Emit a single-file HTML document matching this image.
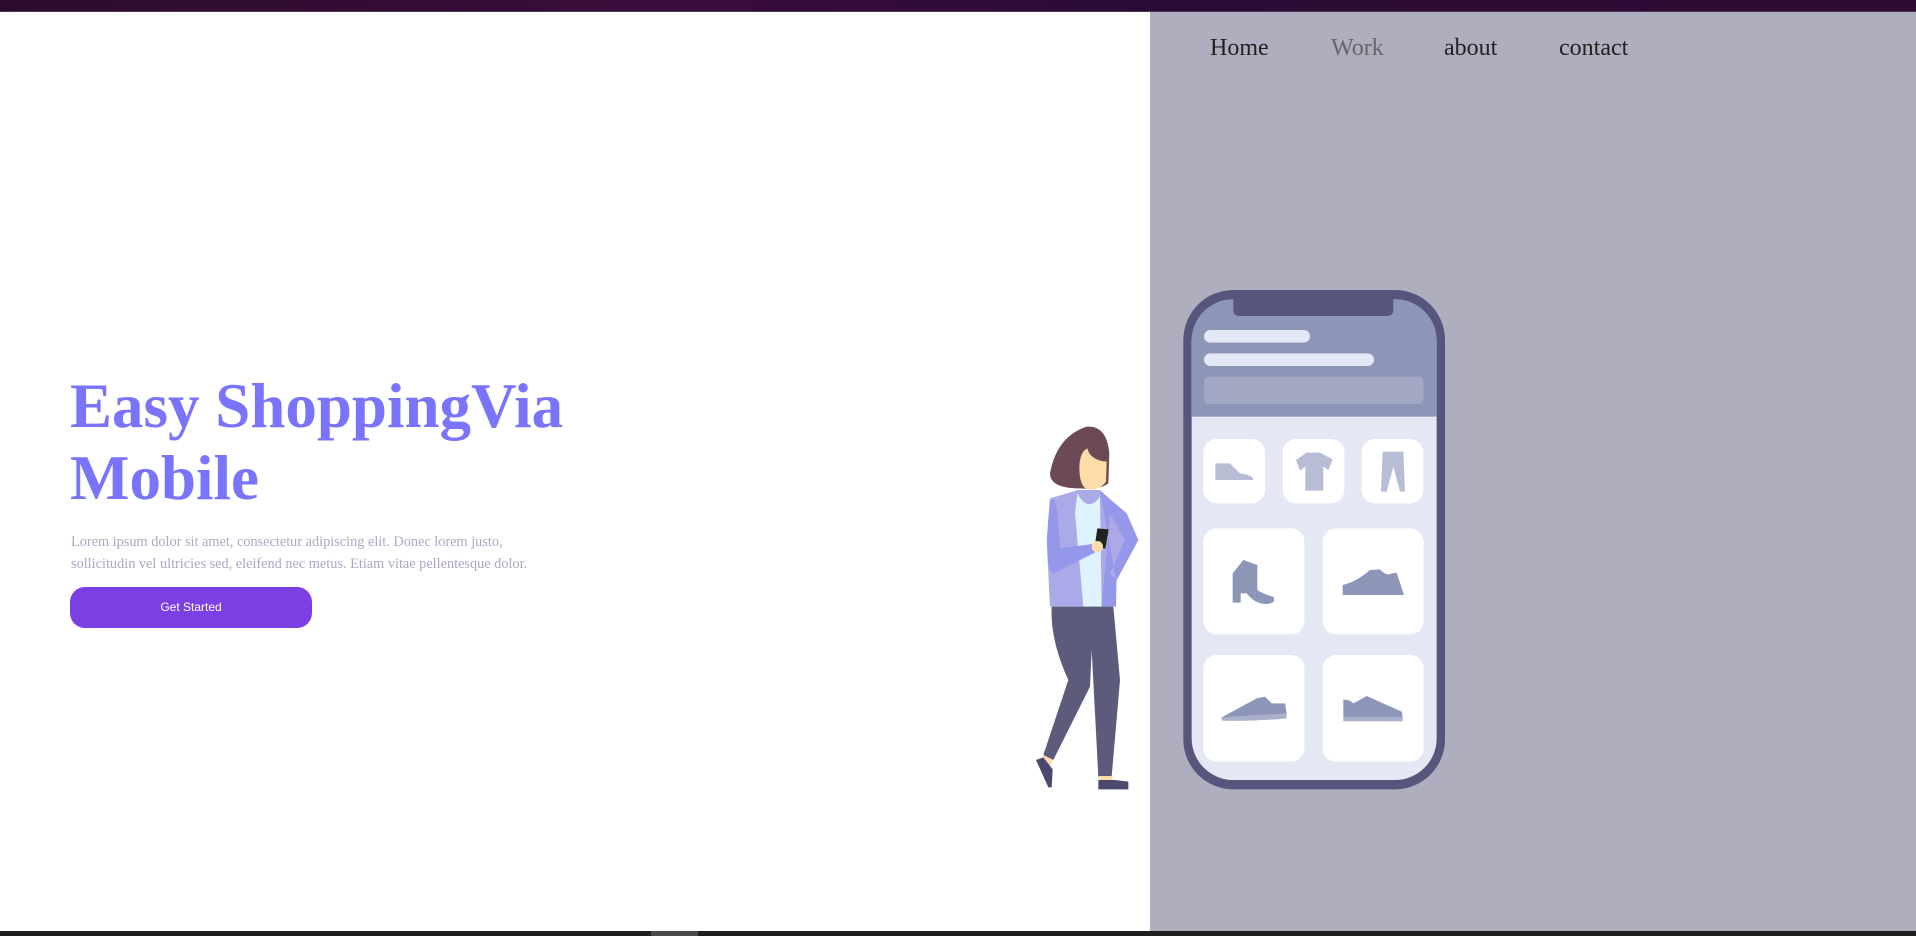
<!DOCTYPE html>
<html><head><meta charset="utf-8"><style>
*{margin:0;padding:0;box-sizing:border-box}
html,body{width:1916px;height:936px;overflow:hidden;background:#fff;font-family:"Liberation Serif",serif}
.top{position:absolute;left:0;top:0;width:1916px;height:12px;background:linear-gradient(90deg,#2b0b2c,#3a0d3c 35%,#2a0a35 60%,#2e0933);border-bottom:1px solid #4a3a4e}
.bot{position:absolute;left:0;top:931px;width:1916px;height:5px;background:#1f1f1f}
.bot i{position:absolute;left:651px;top:0;width:47px;height:5px;background:#4a4a4a}
.right{position:absolute;left:1150px;top:12px;width:766px;height:919px;background:#afaebf}
nav a{position:absolute;top:35px;font-size:24px;color:#222;text-decoration:none}
h1{position:absolute;left:70px;top:370px;font-size:63px;line-height:72px;color:#7a73fc;font-weight:bold}
p{position:absolute;left:71px;top:531px;width:490px;font-size:14.3px;line-height:22px;color:#a9a9c6}
.btn{position:absolute;left:70px;top:587px;width:242px;height:41px;border-radius:15px;background:#7b3fe4;color:#fff;font:12px "Liberation Sans",sans-serif;text-align:center;line-height:41px}
svg{position:absolute;left:1000px;top:280px}
</style></head><body>
<div class="top"></div>
<div class="right"></div>
<nav><a style="left:1210px">Home</a><a style="left:1331px;color:#666">Work</a><a style="left:1444px">about</a><a style="left:1559px">contact</a></nav>
<h1>Easy ShoppingVia<br>Mobile</h1>
<p>Lorem ipsum dolor sit amet, consectetur adipiscing elit. Donec lorem justo, sollicitudin vel ultricies sed, eleifend nec metus. Etiam vitae pellentesque dolor.</p>
<div class="btn">Get Started</div>
<svg width="480" height="530" viewBox="0 0 1440 1590">
<defs><clipPath id="c"><rect x="575" y="58" width="735" height="1442" rx="125"/></clipPath></defs>
<rect x="550" y="30" width="785" height="1498" rx="150" fill="#56557c"/>
<rect x="575" y="58" width="735" height="1442" rx="125" fill="#e4e8f4"/>
<rect x="575" y="58" width="735" height="352" fill="#8e96b8" clip-path="url(#c)"/>
<path d="M700 40 L1180 40 L1180 90 Q1180 108 1160 108 L720 108 Q700 108 700 90 Z" fill="#56557c"/>
<rect x="612" y="150" width="318" height="38" rx="19" fill="#e4e8f4"/>
<rect x="612" y="220" width="510" height="38" rx="19" fill="#e4e8f4"/>
<rect x="612" y="290" width="658" height="82" rx="12" fill="#a2a8c4"/>
<g fill="#fff">
<rect x="610" y="477" width="185" height="193" rx="40"/><rect x="848" y="477" width="185" height="193" rx="40"/><rect x="1085" y="477" width="185" height="193" rx="40"/>
<rect x="610" y="745" width="303" height="318" rx="40"/><rect x="968" y="745" width="303" height="318" rx="40"/>
<rect x="610" y="1125" width="303" height="320" rx="40"/><rect x="968" y="1125" width="303" height="320" rx="40"/>
</g>
<g fill="#b8bdd6">
<path d="M646 550 L690 550 L720 580 Q760 585 760 600 L646 600 Z"/>
<path d="M920 518 L960 518 L998 538 L985 570 L970 560 L970 632 L916 632 L916 560 L900 572 L888 540 Z"/>
<path d="M1148 515 L1210 515 L1215 635 L1200 635 L1180 560 L1160 635 L1143 635 Z"/>
</g>
<g fill="#8e96b8">
<path d="M730 840 L772 855 L772 930 Q795 945 820 950 Q830 970 800 972 Q765 972 740 940 L722 940 L722 968 L698 968 L698 880 Z"/>
<path d="M1028 945 L1028 915 Q1070 905 1110 870 L1140 868 Q1160 890 1175 880 L1190 878 L1212 945 Z"/>
<path d="M665 1312 L770 1255 L795 1250 L815 1270 L855 1270 L860 1300 Q760 1312 665 1312 Z"/>
<path d="M665 1312 Q760 1305 860 1300 L860 1315 Q760 1325 665 1322 Z" fill="#aab0cc"/>
<path d="M1030 1312 L1030 1258 L1050 1262 L1060 1270 L1100 1248 L1205 1295 L1208 1312 Z"/>
<rect x="1030" y="1312" width="178" height="12" fill="#aab0cc"/>
</g>
<path d="M150 580 Q170 470 260 440 Q320 435 328 520 L325 610 Q300 630 240 625 Q150 625 150 580 Z" fill="#6b4a55"/>
<path d="M262 505 Q270 540 320 545 L318 605 Q300 632 262 628 Q238 620 238 560 Q240 515 262 505 Z" fill="#fddcaa"/>
<path d="M150 655 L235 630 L300 630 L355 680 L415 780 L350 900 L348 980 L150 980 L140 780 Z" fill="#aba9e8"/>
<path d="M232 640 Q265 700 300 650 L305 980 L250 980 L225 700 Z" fill="#dff3ff"/>
<path d="M300 632 L380 700 L415 780 L350 900 L330 880 L375 780 L330 700 L305 980 L348 980 L348 900 Z" fill="#9597ea"/>
<path d="M150 660 Q130 870 160 880 L285 818 L278 792 L180 805 Q175 700 165 660 Z" fill="#9597ea"/>
<path d="M292 745 L326 748 L316 806 L284 800 Z" fill="#222"/>
<circle cx="292" cy="800" r="17" fill="#fddcaa"/>
<path d="M155 980 L340 980 L360 1200 L335 1490 L295 1490 L275 1110 L270 1220 L160 1440 L130 1425 L205 1200 Q150 1080 155 980 Z" fill="#5c5b7c"/>
<path d="M130 1425 L160 1440 L150 1460 L120 1448 Z" fill="#fddcaa"/>
<path d="M108 1440 L130 1432 L158 1468 L155 1522 L145 1522 Z" fill="#4a4a6e"/>
<path d="M298 1488 L335 1488 L340 1502 L298 1505 Z" fill="#fddcaa"/>
<path d="M295 1500 L345 1500 L385 1505 L385 1528 L295 1528 Z" fill="#4a4a6e"/>
</svg>
<div class="bot"><i></i></div>
</body></html>
